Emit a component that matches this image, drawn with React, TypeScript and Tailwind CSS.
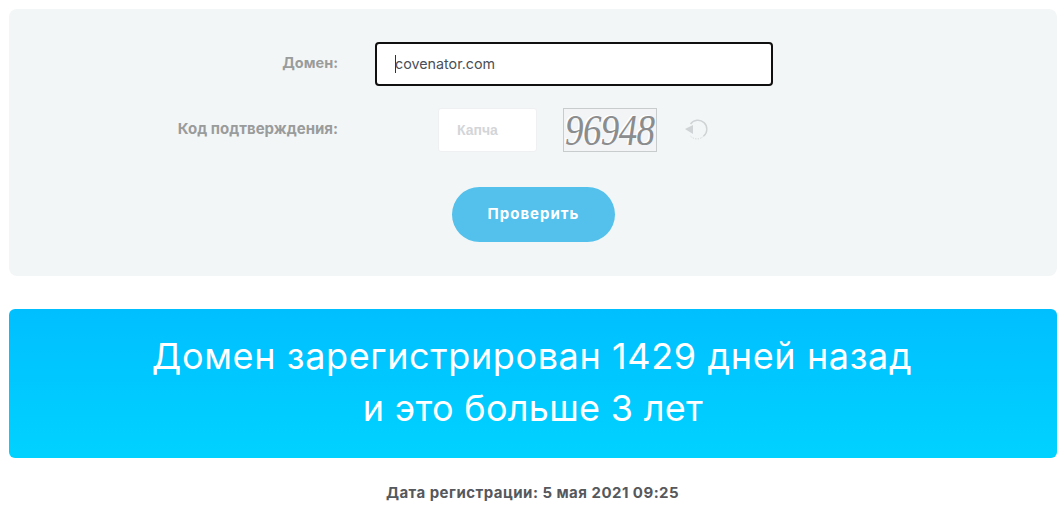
import React from "react";

export default function App() {
  return (
    <div className="w-[1060px] h-[520px] overflow-hidden bg-white px-[9px] pt-[9px] font-['Inter','Noto_Sans',sans-serif]">
      <div className="w-[1048px] h-[267px] rounded-[8px] bg-[#f3f6f7] pt-[33px] flex flex-col">
        <div className="flex items-center h-[44px]">
          <div className="w-[329px] text-right text-[14.5px] font-bold text-[#9a9c9c] pb-[2px]">Домен:</div>
          <div className="ml-[37px] w-[398px] h-[44px] rounded-[4px] border-2 border-[#101010] bg-white flex items-center pl-[18px] text-[14.3px] text-[#4a4f57]">
            <span className="w-px h-[18px] bg-[#333] -mr-px"></span>
            <span>covenator.com</span>
          </div>
        </div>
        <div className="flex items-center h-[44px] mt-[22px]">
          <div className="w-[329px] text-right text-[15px] font-bold text-[#9a9c9c] pb-[2px]">Код подтверждения:</div>
          <div className="ml-[100px] w-[99px] h-[44px] rounded-[3px] border border-[#eef0f1] bg-white flex items-center pl-[18px] text-[14px] font-bold text-[#d3d5d8] font-['Liberation_Sans',sans-serif]">Капча</div>
          <div className="ml-[26px] w-[94px] h-[44px] border border-[#c9cccd] bg-[#f2f4f5] flex items-center pl-[1px]">
            <span className="inline-block font-['Liberation_Serif',serif] italic font-normal text-[37px] leading-none text-[#8a8c8d] tracking-[-0.6px] scale-y-[1.18] [text-shadow:-1.5px_-1px_0_#fff]">96948</span>
          </div>
          <svg className="ml-[27px]" width="26" height="26" viewBox="0 0 26 26" fill="none">
            <path d="M6.5 7 A9 9 0 1 1 19.5 19.2" stroke="#cfd3d5" strokeWidth="1.4" />
            <path d="M19.5 19.2 A9 9 0 0 1 6 18.5" stroke="#cfd3d5" strokeWidth="1" strokeDasharray="1.2 1.4" />
            <path d="M1 12 L9 8 L9 17 Z" fill="#cfd3d5" />
          </svg>
        </div>
        <div className="flex justify-center mt-[35px]">
          <button className="w-[163px] h-[55px] rounded-full bg-[#53c1ec] text-white text-[15px] tracking-[1px] font-bold ml-[1px]">Проверить</button>
        </div>
      </div>
      <div className="mt-[33px] w-[1048px] h-[149px] rounded-[6px] bg-gradient-to-b from-[#00bfff] to-[#00d2ff] text-white text-[36px] leading-[52px] font-normal text-center pt-[21px]">
        <div className="tracking-[0.62px] pr-[2px]">Домен зарегистрирован 1429 дней назад</div>
        <div className="tracking-[0.3px]">и это больше 3 лет</div>
      </div>
      <div className="mt-[24px] pl-[5px] text-center text-[15px] tracking-[0.47px] font-bold text-[#55585c]">Дата регистрации: 5 мая 2021 09:25</div>
    </div>
  );
}
